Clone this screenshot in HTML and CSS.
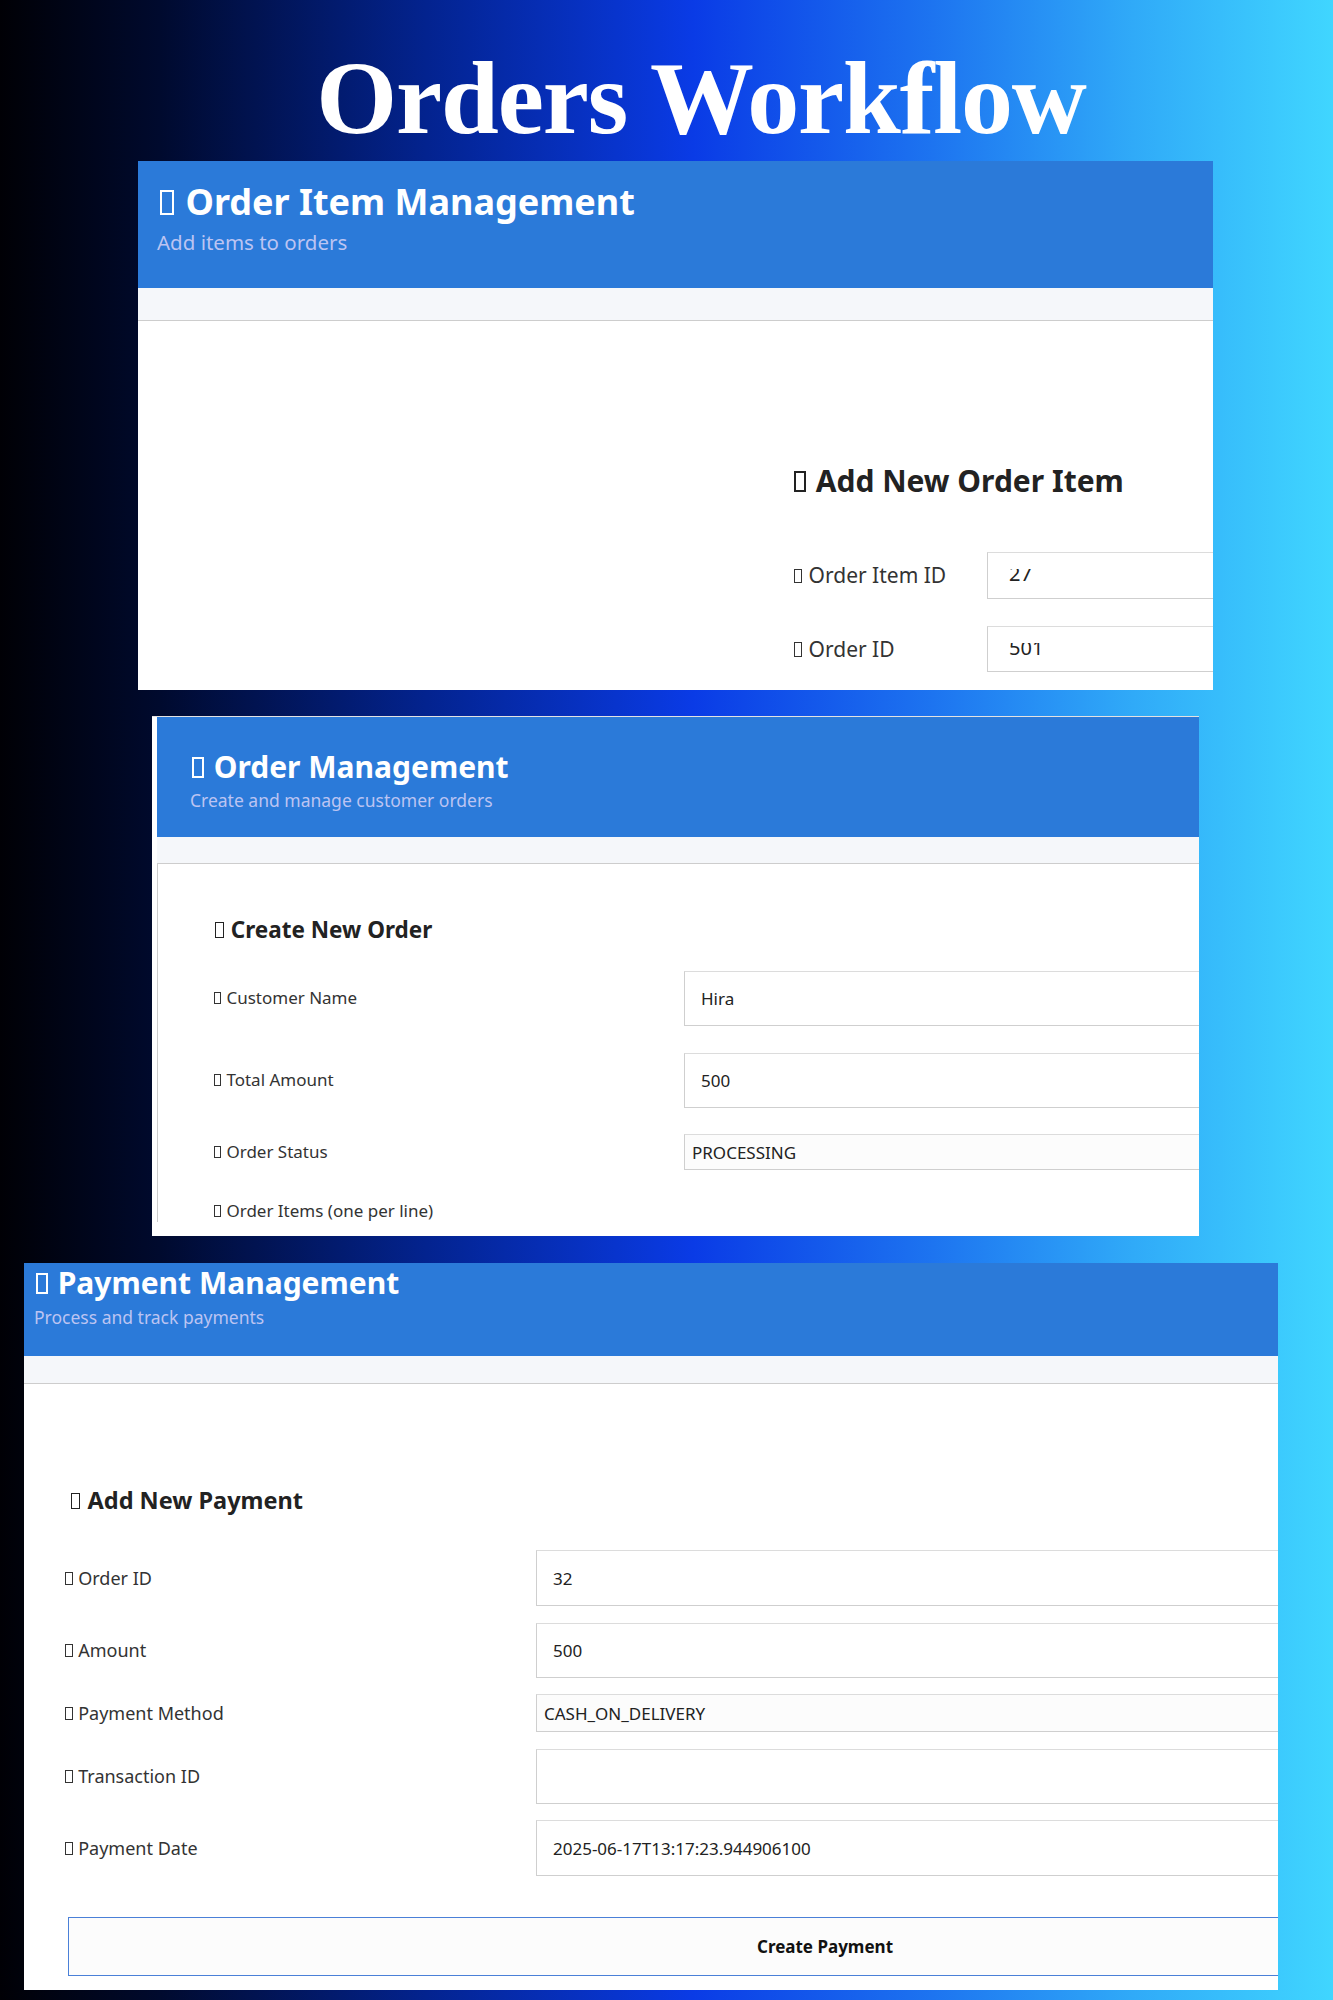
FILE: index.html
```html
<!DOCTYPE html>
<html lang="en">
<head>
    <meta charset="UTF-8">
    <meta name="viewport" content="width=device-width, initial-scale=1.0">
    <title>Orders Workflow</title>
    <link rel="stylesheet" href="styles.css">
</head>
<body>

    <h1 class="page-title">Orders Workflow</h1>

    <!-- Order items screen -->
    <section class="panel panel-items">
        <header class="panel-head">
            <h2 class="head-title"><span class="tofu"></span> Order Item Management</h2>
            <p class="head-sub">Add items to orders</p>
        </header>
        <div class="panel-band"></div>
        <div class="panel-body">
            <h3 class="form-title"><span class="tofu"></span> Add New Order Item</h3>
            <div class="form-grid">
                <label class="form-label"><span class="tofu"></span> Order Item ID</label>
                <div class="field field-clipped"><div class="clip"><span>27</span></div></div>
                <label class="form-label"><span class="tofu"></span> Order ID</label>
                <div class="field field-clipped field-short"><div class="clip"><span>501</span></div></div>
            </div>
        </div>
    </section>

    <!-- Orders screen -->
    <section class="panel panel-orders">
        <header class="panel-head">
            <h2 class="head-title"><span class="tofu"></span> Order Management</h2>
            <p class="head-sub">Create and manage customer orders</p>
        </header>
        <div class="panel-band"></div>
        <div class="panel-body">
            <h3 class="form-title"><span class="tofu"></span> Create New Order</h3>
            <div class="form-grid">
                <label class="form-label"><span class="tofu"></span> Customer Name</label>
                <div class="field">Hira</div>
                <label class="form-label"><span class="tofu"></span> Total Amount</label>
                <div class="field">500</div>
                <label class="form-label"><span class="tofu"></span> Order Status</label>
                <div class="field select">PROCESSING</div>
                <label class="form-label form-label-last"><span class="tofu"></span> Order Items (one per line)</label>
            </div>
        </div>
    </section>

    <!-- Payments screen -->
    <section class="panel panel-payments">
        <header class="panel-head">
            <h2 class="head-title"><span class="tofu"></span> Payment Management</h2>
            <p class="head-sub">Process and track payments</p>
        </header>
        <div class="panel-band"></div>
        <div class="panel-body">
            <h3 class="form-title"><span class="tofu"></span> Add New Payment</h3>
            <div class="form-grid">
                <label class="form-label"><span class="tofu"></span> Order ID</label>
                <div class="field">32</div>
                <label class="form-label"><span class="tofu"></span> Amount</label>
                <div class="field field-short">500</div>
                <label class="form-label"><span class="tofu"></span> Payment Method</label>
                <div class="field select">CASH_ON_DELIVERY</div>
                <label class="form-label"><span class="tofu"></span> Transaction ID</label>
                <div class="field field-short"></div>
                <label class="form-label"><span class="tofu"></span> Payment Date</label>
                <div class="field">2025-06-17T13:17:23.944906100</div>
            </div>
            <button class="btn-submit">Create Payment</button>
        </div>
    </section>

</body>
</html>
```

FILE: styles.css
```css
body {
    margin: 0;
    height: 2000px;
    overflow: hidden;
    font-family: "Noto Sans", "Open Sans", sans-serif;
    background: linear-gradient(90deg, #000005 0%, #000a2e 12%, #03238f 32%, #0a3be6 52%, #1d74f0 70%, #30aaf8 85%, #40d6ff 100%);
}

.page-title {
    margin: 46px 0 0;
    padding-left: 69px;
    height: 104px;
    text-align: center;
    font: bold 104px/104px "Liberation Serif", serif;
    letter-spacing: -1.15px;
    color: #fff;
}

/* missing-glyph boxes from the original screenshots */
.tofu {
    display: inline-block;
    width: 0.4em;
    height: 0.7em;
    border: 0.08em solid currentColor;
    box-sizing: border-box;
    margin: 0 0.05em 0 0.08em;
}

.panel {
    background: #fff;
    overflow: hidden;
    box-sizing: border-box;
}
.panel-items {
    margin: 11px 0 0 138px;
    width: 1075px;
    height: 529px;
}
.panel-orders {
    margin: 26px 0 0 152px;
    width: 1047px;
    height: 520px;
    border-top: 1px solid #e3e3e3;
    padding-left: 5px;
}
.panel-payments {
    margin: 27px 0 0 24px;
    width: 1254px;
    height: 727px;
}

.panel-head {
    background: #2b7ad9;
    color: #fff;
    box-sizing: border-box;
}
.head-title {
    margin: 0;
    font-weight: bold;
    line-height: 1.2;
}
.head-sub {
    margin: 0;
    line-height: 1.2;
    color: #bcc4f2;
}
.panel-items .panel-head { height: 127px; padding: 19px 0 0 19px; }
.panel-items .head-title { font-size: 36px; }
.panel-items .head-sub { font-size: 20.5px; margin-top: 6.5px; }
.panel-orders .panel-head { height: 120px; padding: 32px 0 0 33px; }
.panel-orders .head-title { font-size: 30px; }
.panel-orders .head-sub { font-size: 17.5px; margin-top: 5px; }
.panel-payments .panel-head { height: 93px; padding: 2px 0 0 10px; }
.panel-payments .head-title { font-size: 30px; }
.panel-payments .head-sub { font-size: 17.5px; margin-top: 6px; }

.panel-band {
    background: #f5f7fa;
    border-bottom: 1px solid #cdcdcd;
}
.panel-items .panel-band { height: 32px; }
.panel-orders .panel-band { height: 26px; }
.panel-payments .panel-band { height: 27px; }

.form-title {
    margin: 0;
    font-weight: bold;
    line-height: 1.2;
    color: #222;
}
.form-grid {
    display: grid;
    align-items: center;
}
.form-label {
    color: #333;
    line-height: 1.35;
}
.field {
    display: flex;
    align-items: center;
    box-sizing: border-box;
    border: 1px solid #cfcfcf;
    border-top-color: #dcdcdc;
    background: #fff;
    color: #222;
    padding-left: 16px;
    white-space: nowrap;
}
.select {
    background: #fcfcfc;
    padding-left: 7px;
}

/* order items panel */
.panel-items .panel-body { padding: 142px 0 0 654px; }
.panel-items .form-title { font-size: 30px; margin-bottom: 53px; }
.panel-items .form-grid { grid-template-columns: 195px 600px; row-gap: 27px; }
.panel-items .form-label { font-size: 21px; }
.panel-items .field { height: 47px; font-size: 20px; }
.panel-items .field-short { height: 46px; }

/* value text sits too high in these inputs and gets cut */
.field-clipped {
    display: block;
    padding: 16px 0 0 21px;
}
.clip {
    height: 16px;
    overflow: hidden;
}
.clip span {
    display: block;
    margin-top: -8px;
    line-height: 26px;
}

/* orders panel */
.panel-orders .panel-body {
    border-left: 1px solid #cdcdcd;
    padding: 52px 0 0 55px;
}
.panel-orders .form-title { font-size: 22.5px; margin-bottom: 28px; }
.panel-orders .form-grid { grid-template-columns: 471px 700px; row-gap: 26.5px; }
.panel-orders .form-label { font-size: 17px; }
.panel-orders .field { height: 55px; font-size: 17px; }
.panel-orders .select { height: 36px; }
.form-label-last { margin-top: 3px; }

/* payments panel */
.panel-payments .panel-body { padding: 102px 0 0 40px; }
.panel-payments .form-title { font-size: 23.5px; margin: 0 0 36px 5px; }
.panel-payments .form-grid { grid-template-columns: 472px 1000px; row-gap: 16.5px; }
.panel-payments .form-label { font-size: 18px; }
.panel-payments .field { height: 56px; font-size: 17px; }
.panel-payments .field-short { height: 55px; }
.panel-payments .select { height: 38px; }

.btn-submit {
    display: block;
    margin: 41px 0 0 4px;
    width: 1514px;
    height: 59px;
    border: 1px solid #4a80d8;
    background: #fcfcfc;
    font: bold 17px "Noto Sans", sans-serif;
    color: #111;
    cursor: pointer;
}
```
